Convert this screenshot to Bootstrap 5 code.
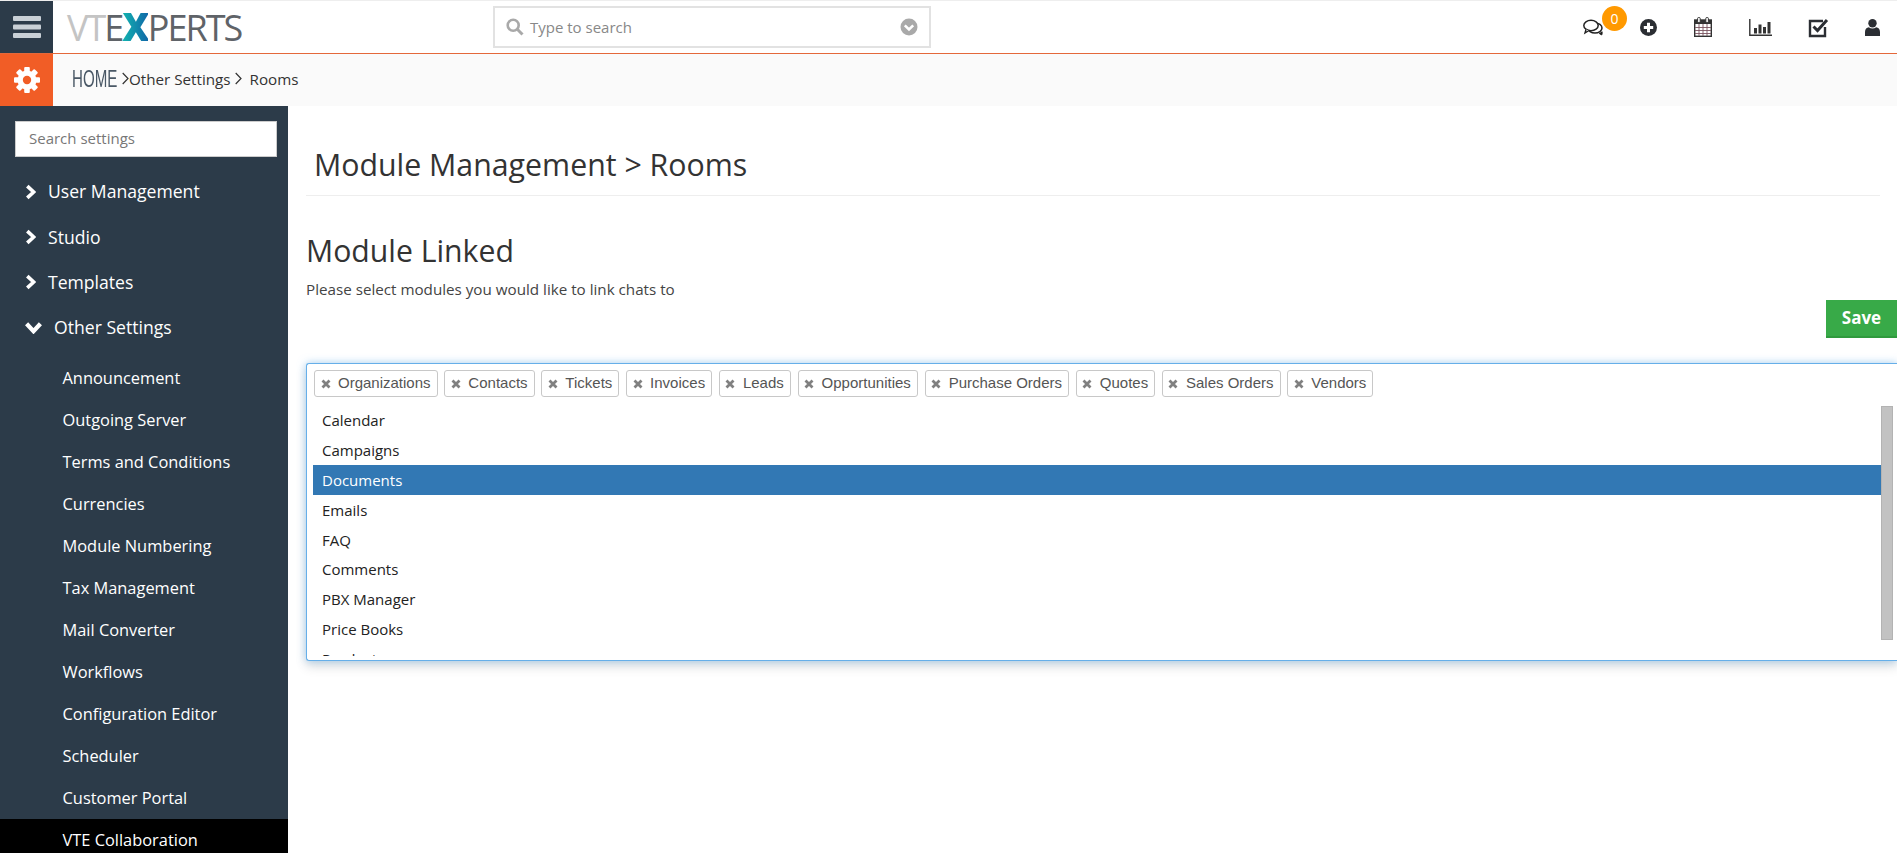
<!DOCTYPE html>
<html lang="en">
<head>
<meta charset="utf-8">
<title>Module Management</title>
<link href="https://cdn.jsdelivr.net/npm/bootstrap@5.3.0/dist/css/bootstrap.min.css" rel="stylesheet">
<style>
html,body{height:853px;overflow:hidden;background:#fff}
body{font-family:"Open Sans",sans-serif;color:#333;border-top:1px solid #eee}
.top-bar{height:53px;border-bottom:1px solid #e4683a}
.burger-cell{width:53px;height:52px;background:#2c3b49}
.logo-text{font-family:"Open Sans",sans-serif;font-weight:400;font-size:36px;line-height:52px;letter-spacing:-2px;margin-left:14px;width:426px;color:#5f6368;white-space:nowrap}
.logo-fade{color:#c4c4c4}
.logo-x{font-weight:800;font-size:38px;background:linear-gradient(90deg,#12b5b0,#1068a8);-webkit-background-clip:text;background-clip:text;color:transparent}
.global-search{width:438px;height:42px;border:2px solid #e2e2e2;padding:0 11px;color:#888;font-size:15px;gap:6px}
.head-icons{margin-left:auto}
.head-cell{width:56px;height:52px;position:relative}
.head-cell.wide-cell{width:58px}
.head-cell.narrow-cell{width:54px}
.head-cell.last-cell{width:50px}
.count-pill{position:absolute;left:37px;top:5px;width:25px;height:25px;border-radius:50%;background:#f90;color:#fff;font-size:14px;line-height:25px;text-align:center}
.crumb-bar{height:52px;background:#fafafa}
.gear-cell{width:53px;height:52px;background:#f15d26}
.crumb-home{display:inline-block;width:43px;font-family:"Liberation Sans",sans-serif;font-size:24px;color:#4a5866;margin-left:19px;transform:scaleX(.63);transform-origin:left center;margin-top:-3px}
.crumb-text{font-size:15.2px;color:#333;margin-top:-2px}
.crumb-sep{margin-top:-3px}
.sep-first{margin-left:7px}
.side-pane{width:288px;height:747px;background:#2c3b49;overflow:hidden;padding-top:15px;flex:none}
.side-search{display:block;width:262px;height:36px;margin:0 0 0 15px;border:1px solid #ccc;border-radius:0;font-size:15px;color:#777;padding:0 13px;line-height:32px;background:#fff}
.menu-head{height:45.3px;color:#fff;font-size:17.6px;padding-left:25px;gap:12px}
.menu-head.first-head{margin-top:12px}
.menu-open{gap:12px}
.sub-list{margin-top:7px}
.sub-item{height:42px;line-height:42px;padding-left:62.5px;color:#fff;font-size:16.4px;font-weight:500}
.sub-item.active-item{background:#000}
.main-pane{min-width:0;padding-left:18px}
.title-wrap{margin:41px 17px 0 0;padding:0 0 12px 8px;border-bottom:1px solid #eee}
.page-title{font-size:30.3px;font-weight:400;line-height:36px;height:36px;overflow:hidden;margin:0;color:#333}
.sec-title{font-size:30.2px;font-weight:400;line-height:36px;margin:36.5px 0 0;color:#333}
.sec-note{font-size:15.2px;line-height:18px;margin:11.5px 0 0;color:#444}
.save-row{height:38px;margin-top:2px}
.save-btn{width:71px;height:38px;padding:0;border:0;border-bottom:2px solid #2f9a3d;border-radius:0;background:#38aa48;color:#fff;font-weight:700;font-size:17px}
.chosen-box{height:298px;margin-top:25px;border:1px solid #66afe9;border-right:0;border-radius:3px 0 0 3px;box-shadow:0 0 8px rgba(102,175,233,.55),0 6px 12px rgba(0,0,0,.12);background:#fff;padding:6px 4px 5px 6px;overflow:hidden}
.tag-row{gap:6.8px;height:27px;padding-left:1px}
.tag-chip{height:27px;border:1px solid #c8c8c8;border-radius:3px;padding:0 6px 0 5.5px;gap:7.5px;font-family:"Liberation Sans",Arial,sans-serif;font-size:15px;color:#555;white-space:nowrap}
.chip-x{color:#808080;flex:none}
.drop-row{margin-top:8px;height:251px}
.drop-list{width:1568px;height:251px;overflow:hidden;flex:none;list-style:none;margin:0;padding:0}
.drop-list li{height:29.9px;line-height:30px;padding-left:9px;font-size:15px;color:#222}
.drop-list li.picked{background:#3278b4;color:#fff}
.thumb-bar{width:12px;height:234px;background:#c2c2c2;border:1px solid #b3b3b3;margin-top:1px;flex:none}
</style>
</head>
<body>
<svg width="0" height="0" class="d-none">
<symbol id="chev-r" viewBox="0 0 12 16"><path d="M2.5 1.5 9.5 8l-7 6.5" fill="none" stroke="currentColor" stroke-width="4"/></symbol>
<symbol id="chev-d" viewBox="0 0 16 12"><path d="M1.5 2.5 8 9.5l6.5-7" fill="none" stroke="currentColor" stroke-width="4"/></symbol>
<symbol id="x-mark" viewBox="0 0 10 10"><path d="M1.5 1.5l7 7m0-7-7 7" fill="none" stroke="currentColor" stroke-width="2.8"/></symbol>
</svg>

<header class="top-bar d-flex align-items-center">
  <div class="burger-cell d-flex align-items-center justify-content-center">
    <svg width="28" height="24" viewBox="0 0 28 24"><rect y="1" width="28" height="5" rx="1" fill="#c9d0d6"/><rect y="9.5" width="28" height="5" rx="1" fill="#c9d0d6"/><rect y="18" width="28" height="5" rx="1" fill="#c9d0d6"/></svg>
  </div>
  <div class="logo-text"><span class="logo-fade">VT</span>E<span class="logo-x">X</span>PERTS</div>
  <div class="global-search d-flex align-items-center">
    <svg width="18" height="18" viewBox="0 0 18 18"><circle cx="7.2" cy="7.2" r="5.5" fill="none" stroke="#a9a9a9" stroke-width="2.6"/><path d="M11.3 11.3l5.2 5.2" stroke="#a9a9a9" stroke-width="3" fill="none"/></svg>
    <span>Type to search</span>
    <svg class="ms-auto" width="18" height="18" viewBox="0 0 18 18"><circle cx="9" cy="9" r="8.5" fill="#a9a9a9"/><path d="M4.8 7.3 9 11.5l4.2-4.2" fill="none" stroke="#fff" stroke-width="2.6"/></svg>
  </div>
  <div class="head-icons d-flex">
    <div class="head-cell d-flex align-items-center justify-content-center">
      <svg width="20" height="17" viewBox="0 0 20 17"><path d="M19 12.5c.4 1.4 0 2.8-.2 3.4-.9-.2-2-.8-2.7-1.6" fill="#222" stroke="#222" stroke-width="1"/><ellipse cx="12" cy="9" rx="7" ry="5" fill="#fff" stroke="#222" stroke-width="1.5"/><ellipse cx="8" cy="6.5" rx="7.2" ry="5.2" fill="#fff" stroke="#222" stroke-width="1.5"/><path d="M3 10.5 2 14l4-2.5" fill="#fff" stroke="#222" stroke-width="1.4"/></svg>
      <span class="count-pill">0</span>
    </div>
    <div class="head-cell narrow-cell d-flex align-items-center justify-content-center">
      <svg width="17" height="17" viewBox="0 0 17 17"><circle cx="8.5" cy="8.5" r="8.5" fill="#2b2e33"/><path d="M8.5 3.8v9.4M3.8 8.5h9.4" stroke="#fff" stroke-width="3"/></svg>
    </div>
    <div class="head-cell d-flex align-items-center justify-content-center">
      <svg width="18" height="20" viewBox="0 0 18 20"><rect x=".7" y="3" width="16.6" height="16.3" fill="#fff" stroke="#333" stroke-width="1.4"/><rect x="1" y="3" width="16" height="4" fill="#333"/><path d="M1 10.5h16M1 13.5h16M1 16.5h16M5 7v12M9 7v12M13 7v12" stroke="#7a5560" stroke-width=".9"/><rect x="3.6" y=".5" width="2.6" height="5" rx="1" fill="#fff" stroke="#333"/><rect x="11.8" y=".5" width="2.6" height="5" rx="1" fill="#fff" stroke="#333"/></svg>
    </div>
    <div class="head-cell wide-cell d-flex align-items-center justify-content-center">
      <svg width="23" height="17" viewBox="0 0 23 17"><path d="M.8 0v16.2H23" fill="none" stroke="#333" stroke-width="1.4"/><rect x="5" y="9" width="3" height="5.5" fill="#333"/><rect x="9.5" y="5.5" width="3" height="9" fill="#333"/><rect x="14" y="8" width="3" height="6.5" fill="#333"/><rect x="18.5" y="3" width="3" height="11.5" fill="#333"/></svg>
    </div>
    <div class="head-cell wide-cell d-flex align-items-center justify-content-center">
      <svg width="21" height="21" viewBox="0 0 21 21"><path d="M17 10v9H2V4h13" fill="none" stroke="#2b2e33" stroke-width="2.4"/><path d="M5.5 9.5l4 4L19 3" fill="none" stroke="#2b2e33" stroke-width="3"/></svg>
    </div>
    <div class="head-cell last-cell d-flex align-items-center justify-content-center">
      <svg width="15" height="17" viewBox="0 0 15 17"><circle cx="7.5" cy="4.3" r="4.2" fill="#2b2e33"/><path d="M0 17v-4c0-3 1.8-4.6 3.8-4.8 2.2 1.6 5.2 1.6 7.4 0 2 .2 3.8 1.8 3.8 4.8v4z" fill="#2b2e33"/></svg>
    </div>
  </div>
</header>

<nav class="crumb-bar d-flex align-items-center">
  <div class="gear-cell d-flex align-items-center justify-content-center">
    <svg width="26" height="26" viewBox="0 0 26 26"><g fill="#fff"><rect x="10.2" y="0" width="5.6" height="26" rx="1"/><rect x="10.2" y="0" width="5.6" height="26" rx="1" transform="rotate(45 13 13)"/><rect x="10.2" y="0" width="5.6" height="26" rx="1" transform="rotate(90 13 13)"/><rect x="10.2" y="0" width="5.6" height="26" rx="1" transform="rotate(135 13 13)"/><circle cx="13" cy="13" r="9.5"/></g><circle cx="13" cy="13" r="4.2" fill="#f15d26"/></svg>
  </div>
  <span class="crumb-home">HOME</span>
  <svg class="crumb-sep sep-first" width="7" height="13" viewBox="0 0 7 13"><path d="M.7 1l5.3 5.5L.7 12" fill="none" stroke="#333" stroke-width="1.2"/></svg>
  <span class="crumb-text">Other Settings</span>
  <svg class="crumb-sep ms-1" width="7" height="13" viewBox="0 0 7 13"><path d="M.7 1l5.3 5.5L.7 12" fill="none" stroke="#333" stroke-width="1.2"/></svg>
  <span class="crumb-text ms-2">Rooms</span>
</nav>

<div class="d-flex">
  <aside class="side-pane">
    <div class="side-search">Search settings</div>
    <div class="menu-head first-head d-flex align-items-center"><svg width="11" height="16" class="text-white"><use href="#chev-r"/></svg>User Management</div>
    <div class="menu-head d-flex align-items-center"><svg width="11" height="16" class="text-white"><use href="#chev-r"/></svg>Studio</div>
    <div class="menu-head d-flex align-items-center"><svg width="11" height="16" class="text-white"><use href="#chev-r"/></svg>Templates</div>
    <div class="menu-head menu-open d-flex align-items-center"><svg width="17" height="13" class="text-white"><use href="#chev-d"/></svg>Other Settings</div>
    <div class="sub-list">
      <div class="sub-item">Announcement</div>
      <div class="sub-item">Outgoing Server</div>
      <div class="sub-item">Terms and Conditions</div>
      <div class="sub-item">Currencies</div>
      <div class="sub-item">Module Numbering</div>
      <div class="sub-item">Tax Management</div>
      <div class="sub-item">Mail Converter</div>
      <div class="sub-item">Workflows</div>
      <div class="sub-item">Configuration Editor</div>
      <div class="sub-item">Scheduler</div>
      <div class="sub-item">Customer Portal</div>
      <div class="sub-item active-item">VTE Collaboration</div>
    </div>
  </aside>
  <main class="main-pane flex-grow-1">
    <div class="title-wrap"><h1 class="page-title">Module Management &gt; Rooms</h1></div>
    <h2 class="sec-title">Module Linked</h2>
    <p class="sec-note">Please select modules you would like to link chats to</p>
    <div class="save-row d-flex justify-content-end"><button type="button" class="btn save-btn">Save</button></div>
    <div class="chosen-box">
      <div class="tag-row d-flex">
        <span class="tag-chip d-flex align-items-center"><svg class="chip-x" width="10" height="10"><use href="#x-mark"/></svg>Organizations</span>
        <span class="tag-chip d-flex align-items-center"><svg class="chip-x" width="10" height="10"><use href="#x-mark"/></svg>Contacts</span>
        <span class="tag-chip d-flex align-items-center"><svg class="chip-x" width="10" height="10"><use href="#x-mark"/></svg>Tickets</span>
        <span class="tag-chip d-flex align-items-center"><svg class="chip-x" width="10" height="10"><use href="#x-mark"/></svg>Invoices</span>
        <span class="tag-chip d-flex align-items-center"><svg class="chip-x" width="10" height="10"><use href="#x-mark"/></svg>Leads</span>
        <span class="tag-chip d-flex align-items-center"><svg class="chip-x" width="10" height="10"><use href="#x-mark"/></svg>Opportunities</span>
        <span class="tag-chip d-flex align-items-center"><svg class="chip-x" width="10" height="10"><use href="#x-mark"/></svg>Purchase Orders</span>
        <span class="tag-chip d-flex align-items-center"><svg class="chip-x" width="10" height="10"><use href="#x-mark"/></svg>Quotes</span>
        <span class="tag-chip d-flex align-items-center"><svg class="chip-x" width="10" height="10"><use href="#x-mark"/></svg>Sales Orders</span>
        <span class="tag-chip d-flex align-items-center"><svg class="chip-x" width="10" height="10"><use href="#x-mark"/></svg>Vendors</span>
      </div>
      <div class="drop-row d-flex">
        <ul class="drop-list">
          <li>Calendar</li>
          <li>Campaigns</li>
          <li class="picked">Documents</li>
          <li>Emails</li>
          <li>FAQ</li>
          <li>Comments</li>
          <li>PBX Manager</li>
          <li>Price Books</li>
          <li>Products</li>
        </ul>
        <div class="thumb-bar"></div>
      </div>
    </div>
  </main>
</div>
<script src="https://cdn.jsdelivr.net/npm/bootstrap@5.3.0/dist/js/bootstrap.bundle.min.js"></script>
</body>
</html>
